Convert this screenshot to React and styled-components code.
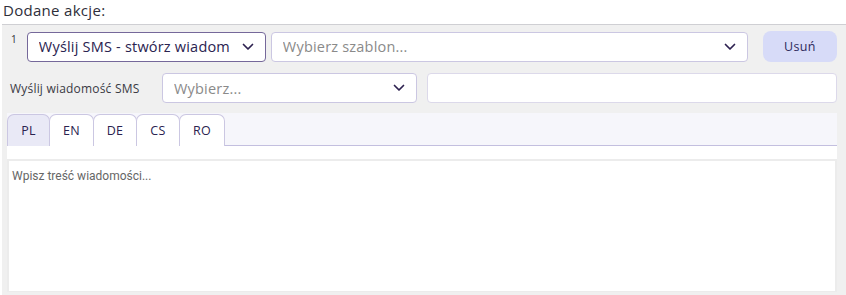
import React from "react";
import styled, { createGlobalStyle } from "styled-components";

const Global = createGlobalStyle`
  html, body { margin: 0; padding: 0; background: #fff; }
  body { font-family: "Open Sans", "Noto Sans", sans-serif; }
`;

const Page = styled.div`
  width: 846px;
  height: 295px;
  overflow: hidden;
`;

const Title = styled.div`
  font-size: 15px;
  letter-spacing: 0.3px;
  color: #2e2e3a;
  padding: 1px 0 0 3px;
  height: 24px;
  box-sizing: border-box;
  line-height: 18px;
`;

const Panel = styled.div`
  margin-left: 2px;
  border-top: 1px solid #cfcfd3;
  background: #f0f0f0;
  padding: 6px 9px 3px 5px;
  display: flex;
  flex-direction: column;
  height: 271px;
  box-sizing: border-box;
`;

const Row = styled.div`
  display: flex;
  align-items: center;
  gap: ${(p) => p.$gap ?? 5}px;
  margin-bottom: ${(p) => p.$mb ?? 0}px;
`;

const Num = styled.span`
  width: 15px;
  font-size: 10px;
  color: #333;
  padding-left: 4px;
  align-self: flex-start;
  line-height: 14px;
  padding-top: 1px;
  box-sizing: border-box;
`;

const Select = styled.div`
  box-sizing: border-box;
  flex-shrink: 0;
  width: ${(p) => p.$w}px;
  height: 30px;
  background: #fff;
  border: 1px solid ${(p) => (p.$active ? "#75689a" : "#cbc7e2")};
  border-radius: 4px;
  display: flex;
  align-items: center;
  justify-content: space-between;
  padding: 0 11px 0 11px;
  font-size: 14.5px;
  letter-spacing: 0.2px;
  color: ${(p) => (p.$active ? "#2a2350" : "#8a8a8a")};
  white-space: nowrap;
  overflow: hidden;
`;

const SelectText = styled.span`
  overflow: hidden;
  flex: 1;
  min-width: 0;
`;

const Chevron = () => (
  <svg width="12" height="8" viewBox="0 0 12 8" style={{ flexShrink: 0, marginLeft: 12 }}>
    <path d="M1.5 1.5 L6 6 L10.5 1.5" fill="none" stroke="#2d2150" strokeWidth="1.7" strokeLinecap="round" strokeLinejoin="round" />
  </svg>
);

const Button = styled.button`
  margin-left: 10px;
  width: 75px;
  height: 31px;
  border: none;
  border-radius: 8px;
  background: #d7dbf8;
  color: #2e2a5c;
  font-family: inherit;
  font-size: 12.5px;
  font-weight: 500;
  letter-spacing: 0.3px;
`;

const Label = styled.span`
  box-sizing: border-box;
  flex-shrink: 0;
  font-size: 12px;
  letter-spacing: 0.2px;
  color: #3a3a44;
  width: 155px;
  padding-left: 3px;
  font-weight: 500;
`;

const Input = styled.div`
  box-sizing: border-box;
  flex: 1;
  height: 30px;
  background: #fff;
  border: 1px solid #dcd9ea;
  border-radius: 4px;
  margin-left: 10px;
`;

const Tabs = styled.div`
  margin-top: 10px;
  display: flex;
  background: #f6f6fb;
  border-bottom: 1px solid #c3bfdf;
  height: 33px;
  box-sizing: border-box;
  padding-top: 1px;
`;

const Tab = styled.div`
  box-sizing: border-box;
  width: ${(p) => p.$w}px;
  height: 32px;
  display: flex;
  align-items: center;
  justify-content: center;
  font-size: 12.5px;
  font-weight: 500;
  letter-spacing: 0.3px;
  color: #2a2350;
  background: ${(p) => (p.$active ? "#e9e9f6" : "#fff")};
  border: 1px solid #cbc7e2;
  border-bottom: none;
  border-radius: 7px 7px 0 0;
  margin-right: -1px;
`;

const Strip = styled.div`
  height: 13px;
  background: #fff;
`;

const TextArea = styled.div`
  flex: 1;
  background: #fff;
  border: 2px solid #ececec;
  border-bottom-width: 1px;
  font-family: Roboto, "Noto Sans", sans-serif;
  font-size: 12px;
  color: #666;
  padding: 8px 0 0 3px;
`;

export default function App() {
  return (
    <Page>
      <Global />
      <Title>Dodane akcje:</Title>
      <Panel>
        <Row $mb={11}>
          <Num>1</Num>
          <Select $w={239} $active>
            <SelectText>Wyślij SMS - stwórz wiadomość</SelectText>
            <Chevron />
          </Select>
          <Select $w={477}>
            <SelectText>Wybierz szablon...</SelectText>
            <Chevron />
          </Select>
          <Button>Usuń</Button>
        </Row>
        <Row $gap={0}>
          <Label>Wyślij wiadomość SMS</Label>
          <Select $w={255}>
            <SelectText>Wybierz...</SelectText>
            <Chevron />
          </Select>
          <Input />
        </Row>
        <Tabs>
          <Tab $w={43} $active>PL</Tab>
          <Tab $w={45}>EN</Tab>
          <Tab $w={44}>DE</Tab>
          <Tab $w={44}>CS</Tab>
          <Tab $w={46}>RO</Tab>
        </Tabs>
        <Strip />
        <TextArea>Wpisz treść wiadomości...</TextArea>
      </Panel>
    </Page>
  );
}
